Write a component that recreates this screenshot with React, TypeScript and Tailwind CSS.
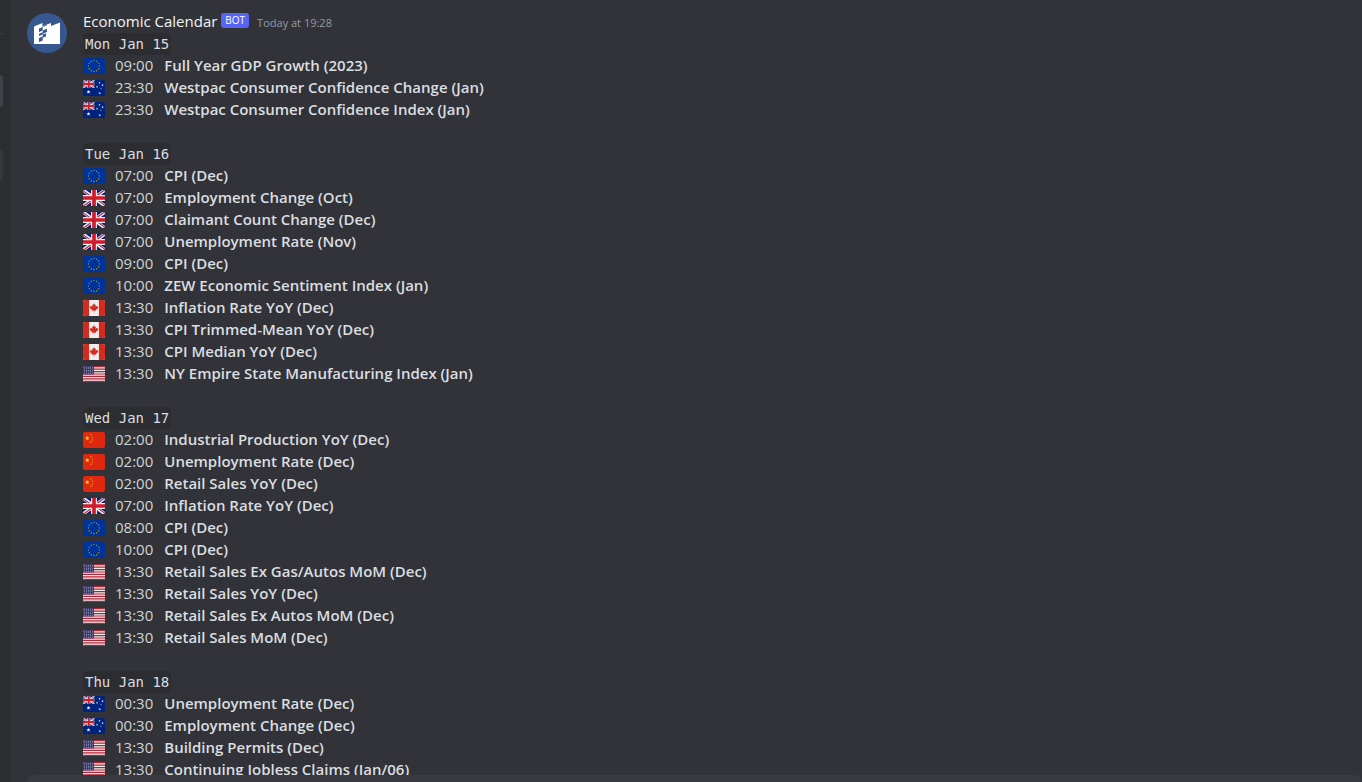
type Country = 'eu' | 'au' | 'gb' | 'ca' | 'us' | 'cn';
type Entry = [Country, string, string];

const days: { date: string; entries: Entry[] }[] = [
  {
    date: 'Mon Jan 15',
    entries: [
      ['eu', '09:00', 'Full Year GDP Growth (2023)'],
      ['au', '23:30', 'Westpac Consumer Confidence Change (Jan)'],
      ['au', '23:30', 'Westpac Consumer Confidence Index (Jan)'],
    ],
  },
  {
    date: 'Tue Jan 16',
    entries: [
      ['eu', '07:00', 'CPI (Dec)'],
      ['gb', '07:00', 'Employment Change (Oct)'],
      ['gb', '07:00', 'Claimant Count Change (Dec)'],
      ['gb', '07:00', 'Unemployment Rate (Nov)'],
      ['eu', '09:00', 'CPI (Dec)'],
      ['eu', '10:00', 'ZEW Economic Sentiment Index (Jan)'],
      ['ca', '13:30', 'Inflation Rate YoY (Dec)'],
      ['ca', '13:30', 'CPI Trimmed-Mean YoY (Dec)'],
      ['ca', '13:30', 'CPI Median YoY (Dec)'],
      ['us', '13:30', 'NY Empire State Manufacturing Index (Jan)'],
    ],
  },
  {
    date: 'Wed Jan 17',
    entries: [
      ['cn', '02:00', 'Industrial Production YoY (Dec)'],
      ['cn', '02:00', 'Unemployment Rate (Dec)'],
      ['cn', '02:00', 'Retail Sales YoY (Dec)'],
      ['gb', '07:00', 'Inflation Rate YoY (Dec)'],
      ['eu', '08:00', 'CPI (Dec)'],
      ['eu', '10:00', 'CPI (Dec)'],
      ['us', '13:30', 'Retail Sales Ex Gas/Autos MoM (Dec)'],
      ['us', '13:30', 'Retail Sales YoY (Dec)'],
      ['us', '13:30', 'Retail Sales Ex Autos MoM (Dec)'],
      ['us', '13:30', 'Retail Sales MoM (Dec)'],
    ],
  },
  {
    date: 'Thu Jan 18',
    entries: [
      ['au', '00:30', 'Unemployment Rate (Dec)'],
      ['au', '00:30', 'Employment Change (Dec)'],
      ['us', '13:30', 'Building Permits (Dec)'],
      ['us', '13:30', 'Continuing Jobless Claims (Jan/06)'],
    ],
  },
];

const names: Record<Country, string> = {
  eu: 'European Union',
  au: 'Australia',
  gb: 'United Kingdom',
  ca: 'Canada',
  us: 'United States',
  cn: 'China',
};

const star = (cx: number, cy: number, r: number) =>
  Array.from({ length: 10 }, (_, i) => {
    const a = (Math.PI * i) / 5 - Math.PI / 2;
    const d = i % 2 ? r * 0.4 : r;
    return `${cx + d * Math.cos(a)},${cy + d * Math.sin(a)}`;
  }).join(' ');

function UnionJack() {
  return (
    <>
      <path fill="#00247d" d="M0 0h36v26H0z" />
      <path stroke="#eee" strokeWidth="5.4" d="M0 0l36 26M36 0L0 26" />
      <path stroke="#cf1b2b" strokeWidth="1.8" d="M0 1l16 11.6M36 25L20 13.4M35 0L20 11M1 26l15-11" />
      <path stroke="#eee" strokeWidth="9.6" d="M18 0v26M0 13h36" />
      <path stroke="#cf1b2b" strokeWidth="6" d="M18 0v26M0 13h36" />
    </>
  );
}

function FlagArt({ country }: { country: Country }) {
  switch (country) {
    case 'eu':
      return (
        <>
          <path fill="#039" d="M0 0h36v26H0z" />
          {Array.from({ length: 12 }, (_, i) => (
            <polygon
              key={i}
              fill="#fc0"
              points={star(18 + 9 * Math.sin((i * Math.PI) / 6), 13 - 9 * Math.cos((i * Math.PI) / 6), 1.5)}
            />
          ))}
        </>
      );
    case 'gb':
      return <UnionJack />;
    case 'au':
      return (
        <>
          <path fill="#00247d" d="M0 0h36v26H0z" />
          <svg width="19" height="13" viewBox="0 0 36 26" preserveAspectRatio="none">
            <UnionJack />
          </svg>
          <polygon fill="#fff" points={star(9, 19.5, 3.4)} />
          <polygon fill="#fff" points={star(27, 4.5, 1.9)} />
          <polygon fill="#fff" points={star(23, 11, 1.9)} />
          <polygon fill="#fff" points={star(32, 8.5, 1.9)} />
          <polygon fill="#fff" points={star(27.5, 21.5, 2)} />
          <polygon fill="#fff" points={star(29.5, 13.5, 1.2)} />
        </>
      );
    case 'ca':
      return (
        <>
          <path fill="#eee" d="M0 0h36v26H0z" />
          <path fill="#d52b1e" d="M0 0h10v26H0zM26 0h10v26H26z" />
          <path
            fill="#d52b1e"
            d="M18 5L19.500 8L21.200 7.300L20.500 11.300L22.600 9.300L23.100 10.400L25 10.200L24.300 12.500L25 13L21.300 16L21.600 17.500L18.400 17V20.500H17.600V17L14.400 17.500L14.700 16L11 13L11.700 12.500L11 10.200L12.900 10.400L13.400 9.300L15.500 11.300L14.800 7.300L16.500 8Z"
          />
        </>
      );
    case 'us':
      return (
        <>
          <path fill="#eee" d="M0 0h36v26H0z" />
          <path
            stroke="#b22334"
            strokeWidth="2"
            d="M0 1h36M0 5h36M0 9h36M0 13h36M0 17h36M0 21h36M0 25h36"
          />
          <path fill="#3c3b6e" d="M0 0h18v14H0z" />
          {Array.from({ length: 25 }, (_, i) => (
            <circle key={i} cx={2 + (i % 5) * 3.5} cy={2 + Math.floor(i / 5) * 2.5} r=".6" fill="#fff" />
          ))}
        </>
      );
    case 'cn':
      return (
        <>
          <path fill="#de2910" d="M0 0h36v26H0z" />
          <polygon fill="#ffde02" points={star(7, 10, 4)} />
          <polygon fill="#ffde02" points={star(13, 4.5, 1.5)} />
          <polygon fill="#ffde02" points={star(15.5, 8.5, 1.5)} />
          <polygon fill="#ffde02" points={star(15.5, 13, 1.5)} />
          <polygon fill="#ffde02" points={star(13, 16.5, 1.5)} />
        </>
      );
  }
}

function Flag({ country }: { country: Country }) {
  return (
    <svg
      role="img"
      aria-label={names[country]}
      viewBox="0 0 36 26"
      preserveAspectRatio="none"
      className="mt-[3px] h-4 w-[22px] shrink-0 rounded-[2px]"
    >
      <FlagArt country={country} />
    </svg>
  );
}

function Avatar() {
  return (
    <svg viewBox="0 0 40 40" className="mt-[2px] size-10 shrink-0" role="img" aria-label="Economic Calendar avatar">
      <circle cx="20" cy="20" r="20" fill="#37588f" />
      <path fill="#fff" d="M7 13.500l8.500-3.500v3l8.500-3v3l9-3.500V31H7z" />
      <path
        fill="#37588f"
        d="M12 15.500l3.700-1.500v3.500L12 19zM15.700 17.500l4.300-1.800v3.300l-4.300 1.700zM12 20.700l3.700-1.500v2.300L12 23zM15.700 21.500l3.300-1.300v3.300l-3.300 1.300zM12 25l3.700-1.500v4L12 29z"
      />
      <path fill="#37588f" d="M15.500 10v4l4.500-1.800v-.8l-4.500 1.600z" />
    </svg>
  );
}

export default function App() {
  return (
    <div className="flex h-screen overflow-hidden bg-[#313338] font-['Open_Sans',sans-serif] text-[15px] leading-5 text-[#dbdee1]">
      <aside className="flex w-[11px] shrink-0 flex-col items-start bg-[#2b2d31]">
        <div className="mt-[33px] h-px w-[3px] bg-[#3f4147]" />
        <div className="mt-[41px] h-8 w-[3px] rounded-r bg-[#404249]" />
        <div className="mt-[42px] h-8 w-[3px] rounded-r bg-[#35373c]" />
      </aside>
      <main className="flex min-w-0 flex-1 flex-col pl-4">
        <article className="flex min-h-0 flex-1 gap-4 overflow-hidden pt-[11px]">
          <Avatar />
          <div className="min-w-0 flex-1">
            <header className="flex h-[22px] items-start">
              <h1 className="text-[#f2f3f5]">Economic Calendar</h1>
              <span className="ml-1 mt-[2px] h-[15px] rounded-[3px] bg-[#5865f2] px-1 text-[10px] leading-[15px] text-white">
                BOT
              </span>
              <time className="ml-2 mt-[2px] text-[11px] text-[#949ba4]">Today at 19:28</time>
            </header>
            <div className="flex flex-col gap-[22px]">
              {days.map((day) => (
                <section key={day.date}>
                  <h2 className="flex">
                    <code className="rounded bg-[#2b2d31] px-[2px] font-['DejaVu_Sans_Mono',monospace] text-[14px] leading-[22px]">
                      {day.date}
                    </code>
                  </h2>
                  <ul>
                    {day.entries.map(([country, time, title], i) => (
                      <li key={i} className="flex h-[22px] items-start whitespace-nowrap">
                        <Flag country={country} />
                        <time className="ml-[10px] text-[#d0d3d7]">{time}</time>
                        <strong className="ml-[11px] font-semibold">{title}</strong>
                      </li>
                    ))}
                  </ul>
                </section>
              ))}
            </div>
          </div>
        </article>
        <div className="h-[7px] shrink-0 rounded-t-lg bg-[#383a40]" />
      </main>
    </div>
  );
}
